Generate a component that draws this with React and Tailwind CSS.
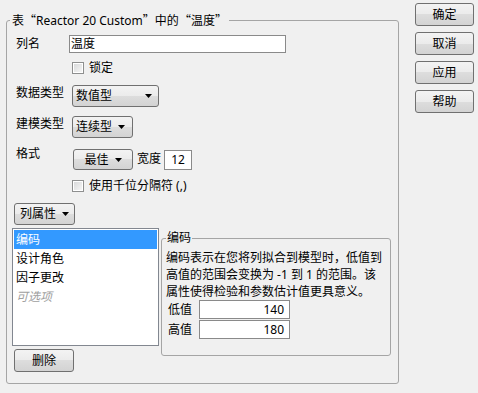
import React from "react";

const Arrow = () => (
  <svg width="7" height="4" viewBox="0 0 7 4" className="shrink-0">
    <path d="M0 0h7L3.5 4z" fill="#000" />
  </svg>
);

const btn =
  "rounded-[3px] border border-[#707070] bg-[linear-gradient(#f3f3f3,#ebebeb_50%,#dddddd_50%,#d3d3d3)] leading-[16px]";

const CheckBox = ({ label }) => (
  <div className="flex items-center h-[12px]">
    <div className="w-[12px] h-[12px] border border-[#8e8f8f] bg-white p-[1px]">
      <div className="w-full h-full bg-[linear-gradient(135deg,#d9dadb,#f5f5f5)]" />
    </div>
    <span className="ml-[5px] leading-[16px]">{label}</span>
  </div>
);

const TextBox = ({ className = "", children }) => (
  <div
    className={`border border-[#8a8a8a] bg-white leading-[16px] flex items-center ${className}`}
  >
    {children}
  </div>
);

const SideButton = ({ text }) => (
  <button className={`${btn} w-[59px] h-[23px] text-center`}>{text}</button>
);

// full-width CJK quote marks
const Q = ({ children }) => (
  <span className="font-['Noto_Sans_CJK_SC',sans-serif]">{children}</span>
);

export default function App() {
  return (
    <div className="w-[478px] h-[393px] bg-[#f0f0f0] flex items-start text-[12px] text-black font-['Noto_Sans','Noto_Sans_CJK_SC',sans-serif]">
      {/* main group */}
      <fieldset className="ml-[6px] mt-[12px] w-[393px] h-[372px] border border-[#a5a5a5] rounded-[3px] pl-[5px] pr-[7px]">
        <legend className="-ml-[2px] px-[2px] leading-[16px] whitespace-nowrap">
          表<Q>“</Q>Reactor 20 Custom<Q>”</Q>中的<Q>“</Q>温度<Q>”</Q>
        </legend>

        {/* 列名 */}
        <div className="flex items-center mt-[6px] h-[18px] pl-[4px]">
          <span className="w-[53px] leading-[16px]">列名</span>
          <TextBox className="w-[217px] h-[18px] pl-[1px]">温度</TextBox>
        </div>

        <div className="mt-[9px] pl-[60px]">
          <CheckBox label="锁定" />
        </div>

        {/* 数据类型 */}
        <div className="flex items-start mt-[11px] pl-[4px]">
          <span className="w-[56px] leading-[16px]">数据类型</span>
          <button className={`${btn} w-[87px] h-[22px] flex items-center justify-between pl-[3px] pr-[6px]`}>
            <span>数值型</span>
            <Arrow />
          </button>
        </div>

        {/* 建模类型 */}
        <div className="flex items-start mt-[9px] pl-[4px]">
          <span className="w-[56px] leading-[16px]">建模类型</span>
          <button className={`${btn} w-[61px] h-[22px] flex items-center justify-between pl-[3px] pr-[7px]`}>
            <span>连续型</span>
            <Arrow />
          </button>
        </div>

        {/* 格式 */}
        <div className="flex items-start mt-[11px] pl-[4px]">
          <span className="w-[57px] leading-[16px] -mt-[3px]">格式</span>
          <button className={`${btn} w-[60px] h-[21px] flex items-center justify-center gap-[6px]`}>
            <span>最佳</span>
            <Arrow />
          </button>
          <span className="ml-[4px] mt-[2px] leading-[16px]">宽度</span>
          <TextBox className="ml-[3px] mt-[1px] w-[28px] h-[20px] justify-center">12</TextBox>
        </div>

        <div className="mt-[10px] pl-[60px]">
          <CheckBox label="使用千位分隔符 (,)" />
        </div>

        {/* 列属性 */}
        <div className="mt-[11px] pl-[2px]">
          <button className={`${btn} w-[61px] h-[22px] flex items-center justify-center gap-[6px]`}>
            <span>列属性</span>
            <Arrow />
          </button>
        </div>

        <div className="flex items-start mt-[3px]">
          <div className="flex flex-col">
            <div className="w-[147px] h-[118px] border border-[#828790] bg-white p-[1px]">
              <div className="h-[19px] bg-[#3399ff] text-white pl-[2px] leading-[19px]">编码</div>
              <div className="h-[19px] pl-[2px] leading-[19px]">设计角色</div>
              <div className="h-[19px] pl-[2px] leading-[19px]">因子更改</div>
              <div className="h-[19px] pl-[2px] leading-[19px] italic text-[#a0a0a0]">可选项</div>
            </div>
            <button className={`${btn} ml-[2px] mt-[3px] w-[60px] h-[23px] text-center`}>删除</button>
          </div>

          {/* 编码 group */}
          <fieldset className="ml-[2px] mt-[1px] w-[230px] h-[127px] border border-[#a5a5a5] rounded-[3px] pl-[4px] pr-[2px] pt-[2px]">
            <legend className="px-[1px] leading-[18px]">编码</legend>
            <p className="leading-[17px] whitespace-nowrap">
              编码表示在您将列拟合到模型时，低值到
              <br />
              高值的范围会变换为 -1 到 1 的范围。该
              <br />
              属性使得检验和参数估计值更具意义。
            </p>
            <div className="flex items-center pl-[2px]">
              <span className="w-[31px] leading-[16px]">低值</span>
              <TextBox className="w-[91px] h-[19px] justify-end pr-[5px]">140</TextBox>
            </div>
            <div className="flex items-center pl-[2px] mt-[1px]">
              <span className="w-[31px] leading-[16px]">高值</span>
              <TextBox className="w-[91px] h-[19px] justify-end pr-[5px]">180</TextBox>
            </div>
          </fieldset>
        </div>
      </fieldset>

      {/* right buttons */}
      <div className="ml-[16px] mt-[3px] flex flex-col gap-[6px]">
        <SideButton text="确定" />
        <SideButton text="取消" />
        <SideButton text="应用" />
        <SideButton text="帮助" />
      </div>
    </div>
  );
}
